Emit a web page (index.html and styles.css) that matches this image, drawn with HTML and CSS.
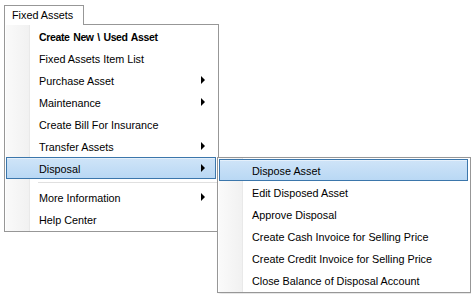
FILE: index.html
```html
<!DOCTYPE html>
<html lang="en">
<head>
  <meta charset="UTF-8" />
  <title>Fixed Assets</title>
  <link rel="stylesheet" href="styles.css">
</head>
<body>
  <div class="menubar">
    <div class="tab">Fixed Assets</div>

    <!-- Main drop-down -->
    <ul class="menu main-menu">
      <li class="item bold">Create New \ Used Asset</li>
      <li class="item">Fixed Assets Item List</li>
      <li class="item sub">Purchase Asset</li>
      <li class="item sub">Maintenance</li>
      <li class="item">Create Bill For Insurance</li>
      <li class="item sub">Transfer Assets</li>
      <li class="item sub active">Disposal</li>
      <li class="separator"></li>
      <li class="item sub">More Information</li>
      <li class="item">Help Center</li>
    </ul>

    <!-- Disposal submenu -->
    <ul class="menu sub-menu">
      <li class="item active">Dispose Asset</li>
      <li class="item">Edit Disposed Asset</li>
      <li class="item">Approve Disposal</li>
      <li class="item">Create Cash Invoice for Selling Price</li>
      <li class="item">Create Credit Invoice for Selling Price</li>
      <li class="item">Close Balance of Disposal Account</li>
    </ul>
  </div>
</body>
</html>
```

FILE: styles.css
```css
html,
body {
  height: 100%;
}

body {
  margin: 0;
  background: #fff;
  font-family: 'Liberation Sans', Arial, sans-serif;
  font-size: 10.8px;
  color: #000;
}

.menubar {
  position: relative;
  height: 294px;
  padding: 5px 0 0 4px;
  box-sizing: border-box;
}

.tab {
  width: 71px;
  height: 19px;
  line-height: 19px;
  padding-left: 7px;
  border: 1px solid #979797;
  border-bottom: none;
  background: #fff;
  position: relative;
  z-index: 2;
}

.menu {
  list-style: none;
  margin: 0;
  padding: 0 1px 1px;
  border: 1px solid #979797;
  background: #fff linear-gradient(to right, #fafafa 0, #f1f1f1 23px, #e9e9e9 23px, #e9e9e9 24px, #fff 24px) no-repeat;
  background-size: 25px 100%;
  background-position: 1px 0;
}

.main-menu {
  width: 211px;
  margin-top: -1px;
}

.sub-menu {
  position: absolute;
  left: 217px;
  top: 157px;
  width: 250px;
  padding-top: 1px;
  box-shadow: 2px 2px 3px rgba(0, 0, 0, 0.12);
}

.item {
  position: relative;
  height: 22px;
  line-height: 22px;
  padding-left: 32px;
  border: 1px solid transparent;
  box-sizing: border-box;
  margin-right: 1px;
  white-space: nowrap;
}

.item.bold {
  font-weight: bold;
  font-size: 10.5px;
  letter-spacing: -0.35px;
  word-spacing: 1px;
}

.item.sub::after {
  content: "";
  position: absolute;
  right: 10px;
  top: 6px;
  border-left: 4px solid #000;
  border-top: 4px solid transparent;
  border-bottom: 4px solid transparent;
}

.item.active {
  background: linear-gradient(to bottom, #cfe4f8, #b9d8f4);
  border-color: #3b76ab;
  box-shadow: inset 0 1px 0 rgba(255, 255, 255, 0.45);
}

.separator {
  height: 7px;
  margin-left: 32px;
  background: linear-gradient(#e0e0e0, #e0e0e0) no-repeat 0 3px / 100% 1px;
}
```
